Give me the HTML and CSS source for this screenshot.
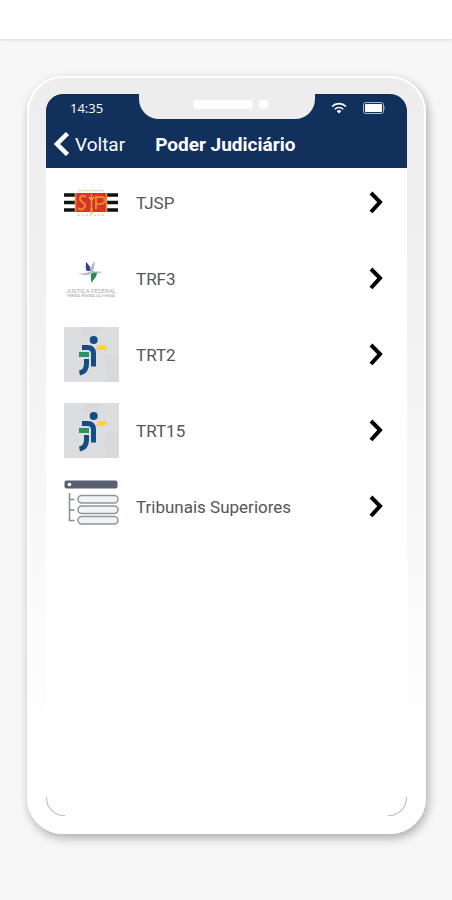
FILE: index.html
```html
<!DOCTYPE html>
<html lang="pt-BR">
<head>
    <meta charset="UTF-8">
    <meta name="viewport" content="width=device-width, initial-scale=1.0">
    <title>Poder Judiciário</title>
    <link rel="stylesheet" href="styles.css">
</head>
<body>
    <div class="topbar"></div>

    <main class="stage">
        <div class="phone">
            <div class="notch">
                <span class="speaker"></span>
                <span class="camera"></span>
            </div>

            <div class="screen">
                <header class="header">
                    <div class="status">
                        <span class="time">14:35</span>
                        <svg class="wifi" viewBox="0 0 16 12" aria-hidden="true">
                            <path d="M1 4.5a10 10 0 0 1 14 0M3.8 7.2a6 6 0 0 1 8.4 0" fill="none" stroke="#fff" stroke-width="1.6"/>
                            <path d="M5.8 9.2a3.1 3.1 0 0 1 4.4 0L8 11.6z" fill="#fff"/>
                        </svg>
                        <svg class="battery" viewBox="0 0 23 12" aria-hidden="true">
                            <rect x="0.5" y="0.5" width="20" height="11" rx="2.5" fill="none" stroke="#a9b5c8"/>
                            <rect x="2" y="2" width="17" height="8" rx="1" fill="#fff"/>
                            <path d="M21.5 3.5q1.5 2.5 0 5z" fill="#a9b5c8"/>
                        </svg>
                    </div>
                    <nav class="navbar">
                        <a class="back" href="#">
                            <svg viewBox="0 0 16 24" aria-hidden="true">
                                <path d="M13.500 1.500L3 12l10.500 10.500" fill="none" stroke="#fff" stroke-width="4.500"/>
                            </svg>
                            Voltar
                        </a>
                        <h1>Poder Judiciário</h1>
                    </nav>
                </header>

                <ul class="list">
                    <li>
                        <a class="row" href="#">
                            <svg class="logo" viewBox="0 0 55 55" aria-hidden="true">
                                <path d="M0 20h19M0 27.500h19M0 35h19M36 20h18M36 27.500h18M36 35h18" stroke="#111" stroke-width="3.600"/>
                                <path d="M14 15.500h26M13 40h28" stroke="#e6d7b0" stroke-width="1.500" stroke-dasharray="3 1"/>
                                <rect x="11" y="18" width="32" height="19" fill="#d8332a"/>
                                <path d="M11.500 18v19M42.500 18v19M27.500 19v19" stroke="#e8962f" stroke-width="1.500"/>
                                <path d="M22 22c-4-3-8 1-5 4s6 4 3 7-5 1-6 0M32 34V22h5c5 0 5 6 0 7h-4" fill="none" stroke="#e8862c" stroke-width="2"/>
                                <path d="M25 22l2.500 3 2.500-3M27.500 33v6" fill="none" stroke="#f0b646" stroke-width="1.500"/>
                            </svg>
                            <span class="name">TJSP</span>
                            <svg class="chevron" viewBox="0 0 14 24" aria-hidden="true"><path d="M2 2l9 9-9 10"/></svg>
                        </a>
                    </li>
                    <li>
                        <a class="row" href="#">
                            <svg class="logo" viewBox="0 0 55 55" aria-hidden="true">
                                <path d="M22 11c0 2-1 7 1 9 2 0 3 0 4-1-1-4-3-6-5-8z" fill="#363f96"/>
                                <path d="M14 22c5 1 9 0 13-2l1 2c-3 3-8 3-14 0z" fill="#b9bbc5"/>
                                <path d="M26 20c1-5 2-7 5-10-1 4 0 7-2 10 3 1 6 0 10 1-4 1-7 2-11 2z" fill="#b5bcc3"/>
                                <path d="M33 22c-5-1-7 1-6 5 0 2 0 3 1 5 1-4 4-4 5-10z" fill="#278b50"/>
                                <text x="27" y="42" text-anchor="middle" class="logo-title">JUSTIÇA FEDERAL</text>
                                <text x="27" y="46" text-anchor="middle" class="logo-sub">TRIBUNAL REGIONAL DA 3ª REGIÃO</text>
                            </svg>
                            <span class="name">TRF3</span>
                            <svg class="chevron" viewBox="0 0 14 24" aria-hidden="true"><path d="M2 2l9 9-9 10"/></svg>
                        </a>
                    </li>
                    <li>
                        <a class="row" href="#">
                            <svg class="logo" viewBox="0 0 55 55" aria-hidden="true">
                                <rect width="55" height="55" fill="#dcdddf"/>
                                <path d="M22 0h16l-9 12-12-4zM40 28h15v27H43z" fill="#d8d9dc"/>
                                <circle cx="29.700" cy="13" r="4" fill="#164b83"/>
                                <path d="M18 20.500h5.500c4 0 6 2 6 6V39.500M22.500 32v5c0 5-2 8-7 9" fill="none" stroke="#164b83" stroke-width="5"/>
                                <path d="M15 25h10v5H15z" fill="#269566"/>
                                <path d="M34 18h9l-1.500 5H32z" fill="#ffd62c"/>
                            </svg>
                            <span class="name">TRT2</span>
                            <svg class="chevron" viewBox="0 0 14 24" aria-hidden="true"><path d="M2 2l9 9-9 10"/></svg>
                        </a>
                    </li>
                    <li>
                        <a class="row" href="#">
                            <svg class="logo" viewBox="0 0 55 55" aria-hidden="true">
                                <rect width="55" height="55" fill="#dcdddf"/>
                                <path d="M22 0h16l-9 12-12-4zM40 28h15v27H43z" fill="#d8d9dc"/>
                                <circle cx="29.700" cy="13" r="4" fill="#164b83"/>
                                <path d="M18 20.500h5.500c4 0 6 2 6 6V39.500M22.500 32v5c0 5-2 8-7 9" fill="none" stroke="#164b83" stroke-width="5"/>
                                <path d="M15 25h10v5H15z" fill="#269566"/>
                                <path d="M34 18h9l-1.500 5H32z" fill="#ffd62c"/>
                            </svg>
                            <span class="name">TRT15</span>
                            <svg class="chevron" viewBox="0 0 14 24" aria-hidden="true"><path d="M2 2l9 9-9 10"/></svg>
                        </a>
                    </li>
                    <li>
                        <a class="row" href="#">
                            <svg class="logo" viewBox="0 0 55 55" aria-hidden="true">
                                <rect x="0.500" y="1.500" width="53" height="8" rx="2" fill="#596070"/>
                                <circle cx="5.500" cy="5.500" r="1.800" fill="#fff"/>
                                <path d="M5.500 14v27.500h5M5.500 20.500h5M5.500 31h5" fill="none" stroke="#878b94" stroke-width="1.500"/>
                                <g fill="#f2f3f5" stroke="#90949c" stroke-width="1.500">
                                    <rect x="14" y="16.500" width="40" height="7.500" rx="3.750"/>
                                    <rect x="14" y="27" width="40" height="7.500" rx="3.750"/>
                                    <rect x="14" y="37.500" width="40" height="7.500" rx="3.750"/>
                                </g>
                            </svg>
                            <span class="name">Tribunais Superiores</span>
                            <svg class="chevron" viewBox="0 0 14 24" aria-hidden="true"><path d="M2 2l9 9-9 10"/></svg>
                        </a>
                    </li>
                </ul>
            </div>
        </div>
    </main>
</body>
</html>
```

FILE: styles.css
```css
* {
    box-sizing: border-box;
}
body {
    margin: 0;
    min-height: 100vh;
    display: flex;
    flex-direction: column;
    background: #f6f6f6;
    font-family: Roboto, "Liberation Sans", sans-serif;
}
a {
    color: inherit;
    text-decoration: none;
}
.topbar {
    height: 39px;
    background: #fff;
    box-shadow: 0 1px 3px rgba(0,0,0,0.12);
}
.stage {
    flex: 1;
    display: flex;
    padding: 37px 26px 66px 27px;
}
.phone {
    flex: 1;
    display: flex;
    position: relative;
    padding: 16px 17px;
    border: 2px solid #fff;
    border-radius: 36px;
    background: linear-gradient(#ededed, #f0f0f0 25%, #fefefe 85%);
    box-shadow: 2px 4px 10px rgba(0,0,0,0.3);
}
.screen {
    flex: 1;
    position: relative;
    border-radius: 17px;
    background: #fff;
}
/* thin arcs in the bottom corners of the screen */
.screen::before,
.screen::after {
    content: "";
    position: absolute;
    bottom: 0;
    width: 18px;
    height: 18px;
    border-bottom: 1px solid #bbb;
}
.screen::before {
    left: 0;
    border-left: 1px solid #bbb;
    border-bottom-left-radius: 18px;
}
.screen::after {
    right: 0;
    border-right: 1px solid #bbb;
    border-bottom-right-radius: 18px;
}
.notch {
    position: absolute;
    z-index: 1;
    top: 16px;
    left: 50%;
    width: 176px;
    height: 25px;
    margin-left: -88px;
    padding: 0 0 4px 8px;
    display: flex;
    align-items: center;
    justify-content: center;
    gap: 6px;
    border-radius: 0 0 20px 20px;
    background: #ededed;
}
.speaker {
    width: 60px;
    height: 9px;
    border-radius: 4px;
    background: #fff;
}
.camera {
    width: 9px;
    height: 9px;
    border-radius: 3px;
    background: #fff;
}
.header {
    border-radius: 17px 17px 0 0;
    background: #12305c;
    color: #fff;
}
.status {
    display: flex;
    align-items: center;
    height: 28px;
    padding: 0 21px 0 24px;
}
.time {
    flex: 1;
    font-family: "Open Sans", sans-serif;
    font-size: 13px;
    font-weight: 500;
}
.wifi {
    width: 16px;
    height: 12px;
    margin-right: 16px;
}
.battery {
    width: 23px;
    height: 12px;
}
.navbar {
    display: flex;
    align-items: center;
    gap: 30px;
    height: 46px;
    padding: 0 8px 2px;
}
.back {
    display: flex;
    align-items: center;
    gap: 5px;
    font-size: 19px;
}
.back svg {
    width: 16px;
    height: 24px;
}
h1 {
    margin: 0;
    font-size: 19px;
    font-weight: bold;
}
.list {
    display: flex;
    flex-direction: column;
    gap: 21px;
    margin: 0;
    padding: 7px 24px 0 18px;
    list-style: none;
}
.row {
    display: flex;
    align-items: center;
    height: 55px;
    color: #555;
    font-size: 17px;
}
.logo {
    width: 55px;
    height: 55px;
    margin-right: 17px;
}
.logo-title {
    fill: #aaa;
    font-size: 6px;
}
.logo-sub {
    fill: #999;
    font-size: 3px;
}
.name {
    flex: 1;
}
.chevron {
    width: 14px;
    height: 24px;
}
.chevron path {
    fill: none;
    stroke: #000;
    stroke-width: 4;
}
```
